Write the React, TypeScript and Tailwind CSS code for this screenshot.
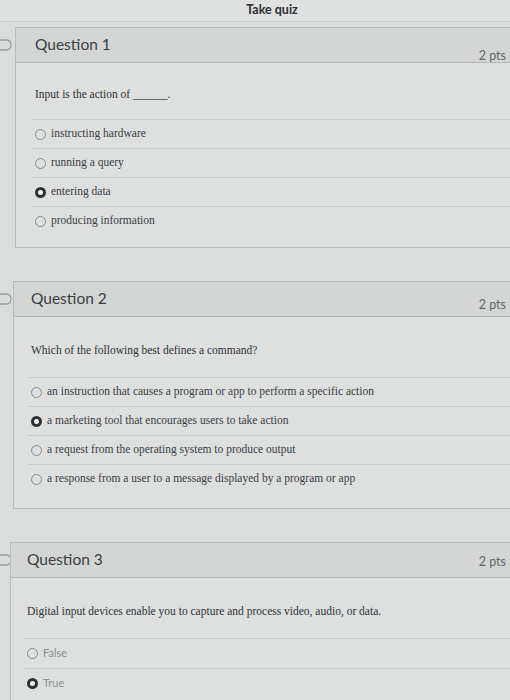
import React from "react";

const serif = { fontFamily: '"Liberation Serif", "Times New Roman", serif' };
const lato = { fontFamily: 'Lato, "Open Sans", sans-serif' };

function Radio({ on }: { on?: boolean }) {
  return on ? (
    <span className="inline-block w-[11px] h-[11px] rounded-full border-[3px] border-[#2f3233] bg-[#f4f4f4] shrink-0" />
  ) : (
    <span className="inline-block w-[11px] h-[11px] rounded-full border border-[#868a8b] bg-[#dcdfdf] shrink-0" />
  );
}

function Flag() {
  return (
    <svg width="14" height="14" viewBox="0 0 14 14" className="absolute left-0">
      <path d="M-4 2 H6 Q11 2 11 7 Q11 12 6 12 H-4" fill="none" stroke="#9a9d9e" strokeWidth="1.3" />
    </svg>
  );
}

type Q = {
  n: number;
  ml: string;
  pad: string;
  text: string;
  answers: string[];
  sel: number;
  latoAns?: boolean;
  qpt: string;
  pb: string;
  rowH: string;
  ptsMt: string;
  ansMt: string;
};

function Card({ q }: { q: Q }) {
  return (
    <div className={`relative ${q.ml} mr-[-30px] border border-[#b8bbba] bg-[#dde0df]`}>
      <div className="flex h-[35px] items-start justify-between border-b border-[#b3b6b5] bg-[#d3d6d5]">
        <span className={`${q.pad} pt-[5px] text-[15.5px] leading-[22px] text-[#3b3e40]`} style={lato}>
          Question {q.n}
        </span>
        <span className={`mr-[33px] ${q.ptsMt} text-[12.5px] leading-[16px] text-[#636668]`} style={lato}>
          2 pts
        </span>
      </div>
      <div className={`${q.pad} ${q.qpt} ${q.pb}`}>
        <div className="text-[11.5px] leading-[14px] text-[#2f3234]" style={serif}>
          {q.text}
        </div>
        <div className={`${q.ansMt} ml-[-3px]`}>
          {q.answers.map((a, i) => (
            <div key={i} className={`flex items-center gap-[5px] border-t border-[#c6c9c8] ${q.rowH} pl-[3px]`}>
              <Radio on={i === q.sel} />
              <span
                className={q.latoAns ? "text-[11px] text-[#8c8f90]" : "text-[11.5px] text-[#3a3d3f]"}
                style={q.latoAns ? lato : serif}
              >
                {a}
              </span>
            </div>
          ))}
        </div>
      </div>
    </div>
  );
}

export default function App() {
  const qs: Q[] = [
    {
      n: 1,
      ml: "ml-[15px]",
      pad: "pl-[19px]",
      text: "Input is the action of ______.",
      answers: ["instructing hardware", "running a query", "entering data", "producing information"],
      sel: 2,
      qpt: "pt-[24px]",
      pb: "pb-[12px]",
      rowH: "h-[29px]",
      ptsMt: "mt-[20px]",
      ansMt: "mt-[18px]",
    },
    {
      n: 2,
      ml: "ml-[13px]",
      pad: "pl-[17px]",
      text: "Which of the following best defines a command?",
      answers: [
        "an instruction that causes a program or app to perform a specific action",
        "a marketing tool that encourages users to take action",
        "a request from the operating system to produce output",
        "a response from a user to a message displayed by a program or app",
      ],
      sel: 1,
      qpt: "pt-[26px]",
      pb: "pb-[15px]",
      rowH: "h-[29px]",
      ptsMt: "mt-[15px]",
      ansMt: "mt-[20px]",
    },
    {
      n: 3,
      ml: "ml-[10px]",
      pad: "pl-[16px]",
      text: "Digital input devices enable you to capture and process video, audio, or data.",
      answers: ["False", "True"],
      sel: 1,
      latoAns: true,
      qpt: "pt-[26px]",
      pb: "pb-[20px]",
      rowH: "h-[30px]",
      ptsMt: "mt-[11px]",
      ansMt: "mt-[20px]",
    },
  ];
  return (
    <div className="w-[510px] h-[700px] overflow-hidden bg-[#dadddc]">
      <div className="h-[22px] border-b border-[#c9cccb] bg-[#dfe1e0] flex items-center justify-center">
        <span className="ml-[34px] text-[12.5px] font-bold text-[#2b2d2f]" style={lato}>
          Take quiz
        </span>
      </div>
      <div className="flex flex-col gap-[33px] pt-[5px]">
        {qs.map((q) => (
          <div key={q.n} className="relative">
            <div className="absolute left-0 top-[11px] w-[14px] h-[14px]">
              <Flag />
            </div>
            <Card q={q} />
          </div>
        ))}
      </div>
    </div>
  );
}
